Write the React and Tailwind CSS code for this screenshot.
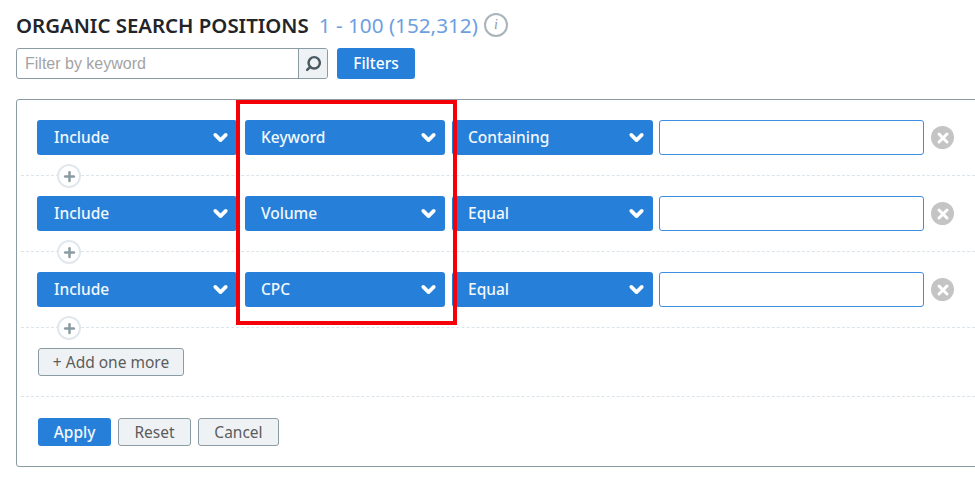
import { Search, ChevronDown, Plus, X } from "lucide-react";

const rows = [
  { field: "Keyword", match: "Containing" },
  { field: "Volume", match: "Equal" },
  { field: "CPC", match: "Equal" },
];

function Select({ label, className = "" }) {
  return (
    <div className={`flex h-[35px] shrink-0 items-center justify-between rounded-[3px] bg-[#2680d9] pr-[6px] text-[15.5px] font-medium text-[#f2f7fc] ${className}`}>
      <span>{label}</span>
      <ChevronDown size={21} strokeWidth={4.2} className="text-white" />
    </div>
  );
}

function FilterRow({ field, match }) {
  return (
    <div>
      <div className="flex items-center">
        <Select label="Include" className="w-[200px] pl-[17px]" />
        <Select label={field} className="ml-2 w-[200px] pl-4" />
        <Select label={match} className="ml-[7px] w-[201px] pl-4" />
        <div className="ml-[6px] h-[35px] w-[265px] rounded-[3px] border border-[#3f8ee0] bg-white" />
        <div className="ml-[7px] flex h-[23px] w-[23px] items-center justify-center rounded-full bg-[#c4c4c4]">
          <X size={16} strokeWidth={4.5} className="text-white" />
        </div>
      </div>
      <div className="relative -ml-4 h-[41px] pt-5">
        <div className="border-t border-dashed border-[#dbe4ea]" />
        <div className="absolute left-9 top-[9px] flex h-6 w-6 items-center justify-center rounded-full border-2 border-[#e1e8ed] bg-white">
          <Plus size={15} strokeWidth={4} className="text-[#8a9ba3]" />
        </div>
      </div>
    </div>
  );
}

function GreyButton({ children, className = "" }) {
  return (
    <button type="button" className={`h-7 rounded-[3px] border border-[#8a9ba3] bg-[#eff2f5] pt-px text-[15.5px] text-[#5c5c5c] ${className}`}>
      {children}
    </button>
  );
}

export default function App() {
  return (
    <div className="relative h-[480px] w-[975px] overflow-hidden bg-white font-['Noto_Sans',sans-serif]">
      <div className="pl-4 pt-[13px]">
        <div className="flex h-6 items-center">
          <h1 className="text-[20.4px] font-semibold leading-6 text-[#22242a]">ORGANIC SEARCH POSITIONS</h1>
          <span className="ml-[10px] text-[20.7px] leading-6 text-[#6d9fe0]">1 - 100 (152,312)</span>
          <div className="ml-[6px] flex h-6 w-6 items-center justify-center rounded-full border-2 border-[#a9b4b9]">
            <span className="font-['Liberation_Serif',serif] text-[14px] italic leading-none text-[#8a9ba3]">i</span>
          </div>
        </div>

        <div className="mt-[11px] flex h-[31px]">
          <div className="flex w-[312px] overflow-hidden rounded-[3px] border border-[#8a9ba3]">
            <div className="flex flex-1 items-center pl-2 font-['Liberation_Sans',sans-serif] text-[16px] text-[#a3a3a3]">Filter by keyword</div>
            <div className="flex w-[29px] items-center justify-center border-l border-[#8a9ba3] bg-[#eff2f5]">
              <Search size={17} strokeWidth={3.5} className="-scale-x-100 text-[#4a5a62]" />
            </div>
          </div>
          <button type="button" className="ml-[9px] w-[78px] rounded-[3px] bg-[#2680d9] text-[15.5px] font-medium text-white">Filters</button>
        </div>

        <div className="mt-5 h-[368px] w-[970px] rounded-[3px] border border-[#8a9ba3] pl-5 pt-5">
          {rows.map((row) => (
            <FilterRow key={row.field} field={row.field} match={row.match} />
          ))}
          <GreyButton className="ml-px block w-[146px]">+ Add one more</GreyButton>
          <div className="-ml-4 mt-5 border-t border-dashed border-[#dbe4ea]" />
          <div className="ml-px mt-[21px] flex">
            <button type="button" className="h-7 w-[73px] rounded-[3px] bg-[#2680d9] pt-px text-[15.5px] font-medium text-[#f2f7fc]">Apply</button>
            <GreyButton className="ml-[7px] w-[73px]">Reset</GreyButton>
            <GreyButton className="ml-[7px] w-[81px]">Cancel</GreyButton>
          </div>
        </div>
      </div>

      {/* red highlight drawn over the second column */}
      <div className="absolute left-[236px] top-[100px] h-[225px] w-[221px] border-4 border-[#f40009]" />
    </div>
  );
}
